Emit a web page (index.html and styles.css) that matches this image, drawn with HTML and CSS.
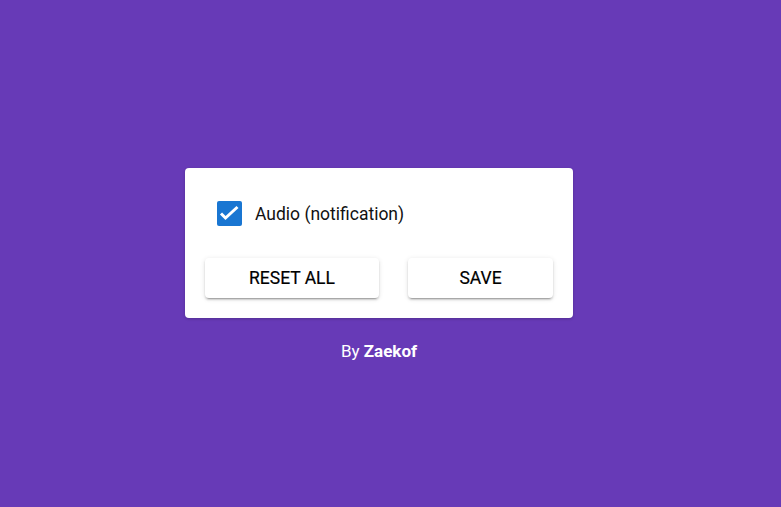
FILE: index.html
```html
<!DOCTYPE html>
<html>
<head>
<meta charset="utf-8">
<link rel="stylesheet" href="styles.css">
</head>
<body>
<div class="page">
  <div class="card">
    <label class="option">
      <span class="box">
        <svg viewBox="0 0 25 25" width="25" height="25"><path d="M4 12.5 L8.5 17 L20.5 6" fill="none" stroke="#fff" stroke-width="3"/></svg>
      </span>
      <span class="label">Audio (notification)</span>
    </label>
    <div class="actions">
      <button class="btn btn-reset">RESET ALL</button>
      <button class="btn btn-save">SAVE</button>
    </div>
  </div>
  <div class="credit">By <strong>Zaekof</strong></div>
</div>
</body>
</html>
```
FILE: styles.css
```css
html, body {
  margin: 0;
  padding: 0;
  height: 100%;
}
body {
  background: #673ab7;
  font-family: Roboto, "Liberation Sans", sans-serif;
}
.page {
  display: flex;
  flex-direction: column;
  align-items: center;
  padding-top: 168px;
  padding-right: 23px;
}
.card {
  width: 388px;
  box-sizing: border-box;
  background: #fff;
  border-radius: 4px;
  padding: 33px 20px 20px;
  box-shadow: 0 1px 3px rgba(0,0,0,0.2);
}
.option {
  display: flex;
  align-items: center;
  padding-left: 12px;
  height: 25px;
}
.box {
  width: 25px;
  height: 25px;
  border-radius: 2px;
  background: #1976d2;
  display: block;
}
.box svg { display: block; }
.label {
  margin-left: 13px;
  font-size: 17.5px;
  color: #111;
}
.actions {
  display: flex;
  justify-content: space-between;
  margin-top: 32px;
}
.btn {
  height: 40px;
  border: none;
  border-radius: 4px;
  background: #fff;
  font-family: Roboto, "Liberation Sans", sans-serif;
  font-size: 17.5px;
  font-weight: 400;
  -webkit-text-stroke: 0.18px #000;
  color: #000;
  box-shadow: 0 3px 1px -2px rgba(0,0,0,0.2), 0 2px 2px 0 rgba(0,0,0,0.14), 0 1px 5px 0 rgba(0,0,0,0.12);
  padding: 0;
}
.btn-reset { width: 174px; }
.btn-save { width: 145px; }
.credit {
  margin-top: 23px;
  color: #fff;
  font-size: 17px;
}
.credit strong {
  font-weight: 700;
}
```
